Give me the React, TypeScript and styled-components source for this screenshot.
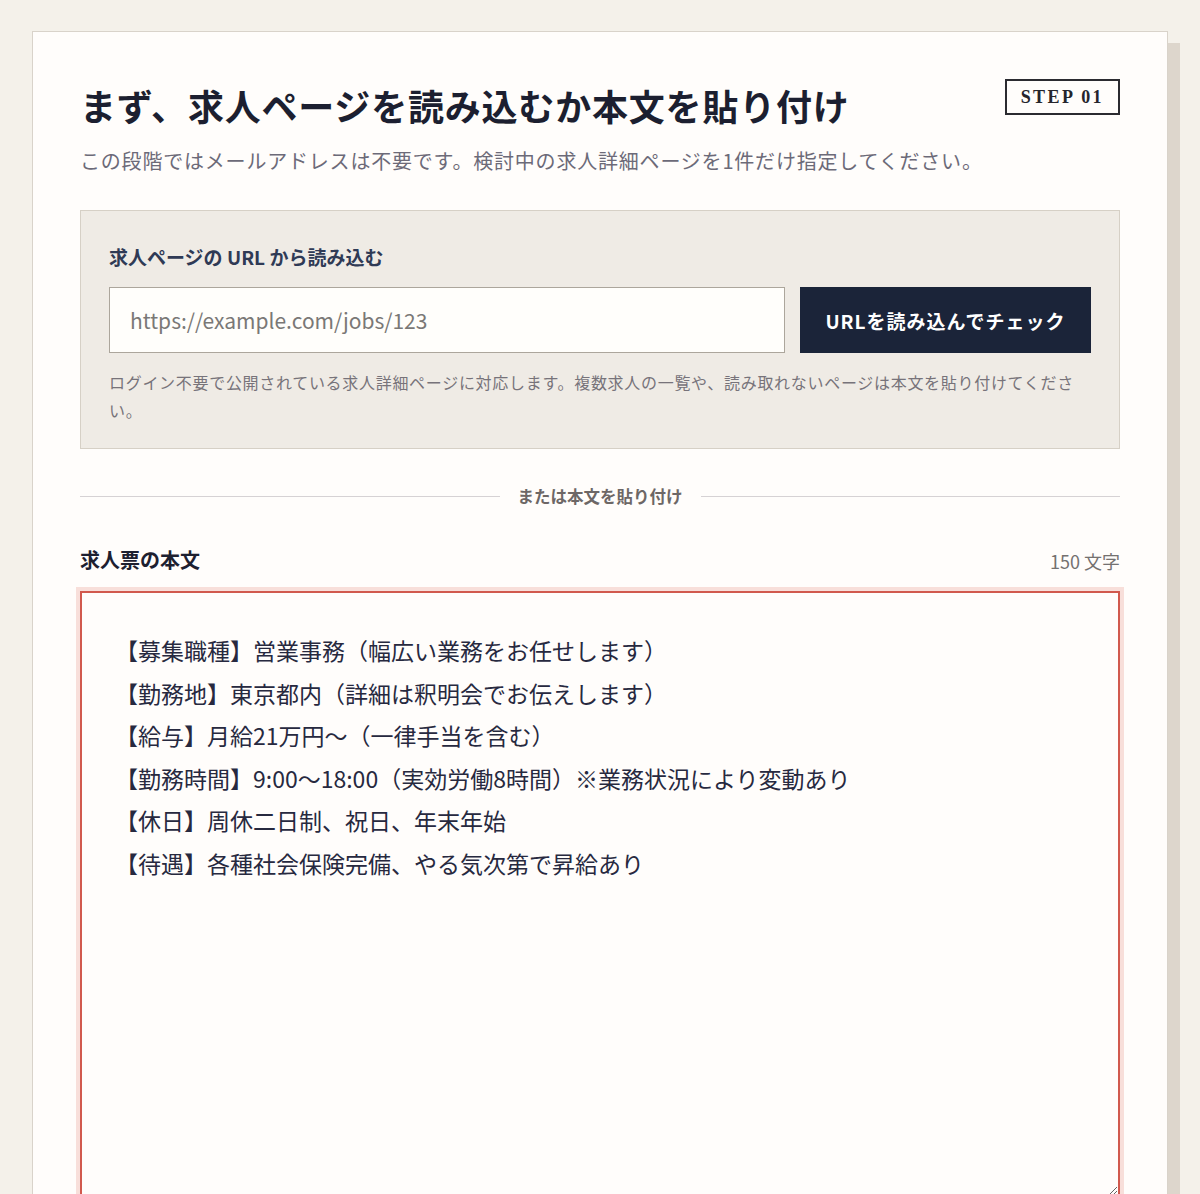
import React, { useState } from 'react';
import styled, { createGlobalStyle } from 'styled-components';

const sans = `"Noto Sans CJK JP", "Noto Sans", sans-serif`;
const serif = `"Liberation Serif", "Noto Sans CJK JP", serif`;

const GlobalStyle = createGlobalStyle`
    * { box-sizing: border-box; }
    body {
        margin: 0;
        background: #f4f1ea;
        font-family: ${sans};
        color: #1d2033;
    }
`;

const Page = styled.div`
    padding: 31px 32px 0 32px;
`;

const Card = styled.section`
    background: #fffdfb;
    border: 1px solid #d9d3ca;
    box-shadow: 12px 12px 0 #ddd6cc;
    padding: 48px 47px 48px 47px;
`;

const Header = styled.div`
    display: flex;
    justify-content: space-between;
    align-items: flex-start;
`;

const Title = styled.h1`
    margin: 0;
    font-size: 36px;
    font-weight: 700;
    line-height: 50px;
    letter-spacing: 0.8px;
    color: #1c1f30;
`;

const Step = styled.span`
    margin-top: -1px;
    border: 2px solid #2b2b30;
    padding: 0 14px;
    height: 36px;
    display: inline-flex;
    align-items: center;
    font-family: ${serif};
    font-weight: 700;
    font-size: 18px;
    letter-spacing: 2.4px;
    color: #25252c;
`;

const Lead = styled.p`
    margin: 15px 0 0 0;
    font-size: 20px;
    line-height: 32px;
    color: #6c6a78;
    letter-spacing: 0.8px;
`;

const UrlPanel = styled.div`
    margin-top: 33px;
    background: #efebe5;
    border: 1px solid #d6d0c6;
    padding: 31px 28px 24px 28px;
`;

const PanelLabel = styled.div`
    font-size: 19px;
    font-weight: 700;
    line-height: 30px;
    color: #2f3a55;
`;

const UrlRow = styled.div`
    display: flex;
    gap: 15px;
    margin-top: 15px;
`;

const UrlInput = styled.input`
    flex: 1;
    height: 66px;
    border: 1px solid #aca69c;
    background: #fffefb;
    padding: 0 20px;
    font-family: ${sans};
    font-size: 21px;
    color: #1d2033;
    outline: none;

    &::placeholder {
        color: #7a7876;
    }
`;

const PrimaryButton = styled.button`
    width: 291px;
    height: 66px;
    border: none;
    background: #1b2439;
    color: #ffffff;
    font-family: ${sans};
    font-size: 19px;
    font-weight: 700;
    letter-spacing: 1px;
    cursor: pointer;
`;

const Help = styled.p`
    margin: 15px 0 0 0;
    font-size: 16px;
    line-height: 28px;
    letter-spacing: 0.7px;
    color: #77737a;
`;

const Divider = styled.div`
    display: flex;
    align-items: center;
    gap: 18px;
    margin-top: 35px;
    font-size: 16.5px;
    line-height: 24px;
    font-weight: 700;
    color: #6d6766;

    &::before, &::after {
        content: '';
        flex: 1;
        height: 1px;
        background: #d6d2d4;
    }
`;

const FieldHead = styled.div`
    display: flex;
    justify-content: space-between;
    align-items: flex-end;
    margin-top: 37px;
`;

const FieldLabel = styled.label`
    font-size: 20px;
    font-weight: 700;
    line-height: 30px;
    color: #1d2030;
`;

const Counter = styled.span`
    font-size: 18px;
    line-height: 28px;
    color: #747170;
`;

const BodyText = styled.textarea`
    display: block;
    width: 100%;
    height: 606px;
    margin-top: 16px;
    border: 2px solid #d1594d;
    box-shadow: 0 0 0 4px #f8dfda;
    background: #fffdfb;
    padding: 36px 36px 36px 33px;
    font-family: ${sans};
    font-size: 23px;
    line-height: 42.5px;
    color: #27293f;
    outline: none;
    resize: vertical;
`;

const sample = `【募集職種】営業事務（幅広い業務をお任せします）
【勤務地】東京都内（詳細は釈明会でお伝えします）
【給与】月給21万円〜（一律手当を含む）
【勤務時間】9:00〜18:00（実効労働8時間）※業務状況により変動あり
【休日】周休二日制、祝日、年末年始
【待遇】各種社会保険完備、やる気次第で昇給あり`;

function App() {
    const [url, setUrl] = useState('');
    const [body, setBody] = useState(sample);

    return (
        <>
            <GlobalStyle />
            <Page>
                <Card>
                    <Header>
                        <Title>まず、求人ページを読み込むか本文を貼り付け</Title>
                        <Step>STEP 01</Step>
                    </Header>
                    <Lead>この段階ではメールアドレスは不要です。検討中の求人詳細ページを1件だけ指定してください。</Lead>

                    <UrlPanel>
                        <PanelLabel>求人ページの URL から読み込む</PanelLabel>
                        <UrlRow>
                            <UrlInput
                                value={url}
                                onChange={e => setUrl(e.target.value)}
                                placeholder="https://example.com/jobs/123"
                            />
                            <PrimaryButton>URLを読み込んでチェック</PrimaryButton>
                        </UrlRow>
                        <Help>ログイン不要で公開されている求人詳細ページに対応します。複数求人の一覧や、読み取れないページは本文を貼り付けてください。</Help>
                    </UrlPanel>

                    <Divider>または本文を貼り付け</Divider>

                    <FieldHead>
                        <FieldLabel htmlFor="body">求人票の本文</FieldLabel>
                        <Counter>{body.length} 文字</Counter>
                    </FieldHead>
                    <BodyText id="body" value={body} onChange={e => setBody(e.target.value)} />
                </Card>
            </Page>
        </>
    );
}

export default App;
